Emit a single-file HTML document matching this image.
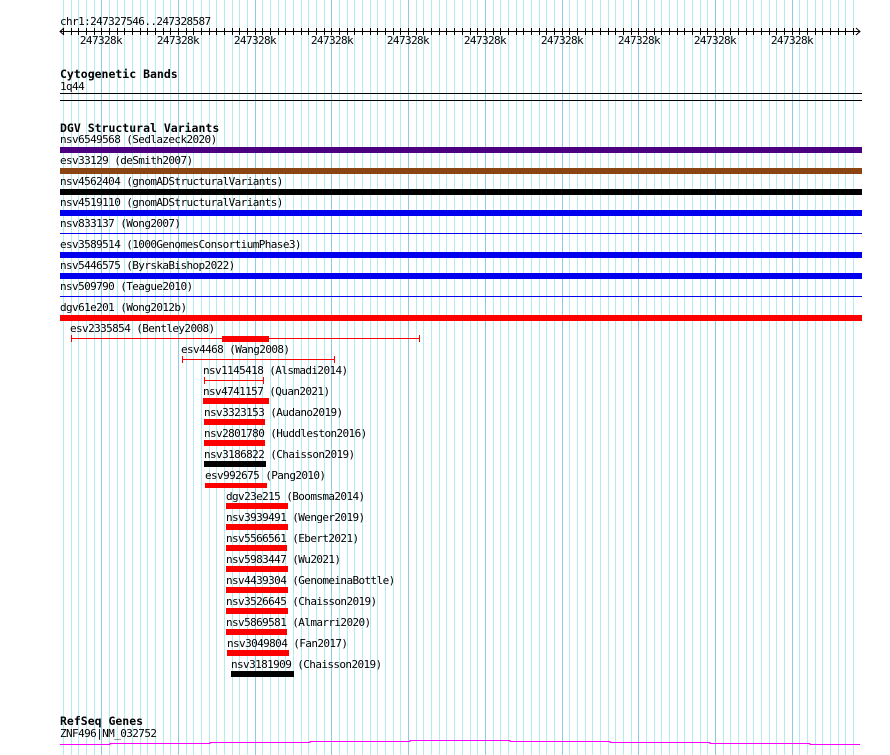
<!DOCTYPE html>
<html><head><meta charset="utf-8"><style>
html,body{margin:0;padding:0;background:#fff;}
svg{display:block;}
text{font-family:"DejaVu Sans Mono","Liberation Mono",monospace;font-size:11px;letter-spacing:-0.6px;fill:#000;}
.b{font-weight:bold;font-size:11.5px;letter-spacing:0;}
</style></head><body>
<svg width="890" height="755" xmlns="http://www.w3.org/2000/svg">
<defs>
<path id="L" d="M63.5 0V755M71.5 0V755M78.5 0V755M86.5 0V755M94.5 0V755M109.5 0V755M117.5 0V755M124.5 0V755M132.5 0V755M140.5 0V755M147.5 0V755M155.5 0V755M163.5 0V755M170.5 0V755M186.5 0V755M193.5 0V755M201.5 0V755M209.5 0V755M216.5 0V755M224.5 0V755M232.5 0V755M239.5 0V755M247.5 0V755M262.5 0V755M270.5 0V755M278.5 0V755M285.5 0V755M293.5 0V755M301.5 0V755M308.5 0V755M316.5 0V755M324.5 0V755M339.5 0V755M347.5 0V755M354.5 0V755M362.5 0V755M370.5 0V755M377.5 0V755M385.5 0V755M393.5 0V755M400.5 0V755M416.5 0V755M423.5 0V755M431.5 0V755M439.5 0V755M446.5 0V755M454.5 0V755M462.5 0V755M470.5 0V755M477.5 0V755M493.5 0V755M500.5 0V755M508.5 0V755M516.5 0V755M523.5 0V755M531.5 0V755M539.5 0V755M546.5 0V755M554.5 0V755M569.5 0V755M577.5 0V755M585.5 0V755M592.5 0V755M600.5 0V755M608.5 0V755M615.5 0V755M623.5 0V755M631.5 0V755M646.5 0V755M654.5 0V755M661.5 0V755M669.5 0V755M677.5 0V755M684.5 0V755M692.5 0V755M700.5 0V755M707.5 0V755M723.5 0V755M730.5 0V755M738.5 0V755M746.5 0V755M753.5 0V755M761.5 0V755M769.5 0V755M776.5 0V755M784.5 0V755M799.5 0V755M807.5 0V755M815.5 0V755M822.5 0V755M830.5 0V755M838.5 0V755M845.5 0V755M853.5 0V755"/>
<path id="M" d="M101.5 0V755M178.5 0V755M255.5 0V755M331.5 0V755M408.5 0V755M485.5 0V755M562.5 0V755M638.5 0V755M715.5 0V755M792.5 0V755"/>
<clipPath id="tc"><rect x="0" y="28" width="890" height="7"/></clipPath>
</defs>
<use href="#L" stroke="#b4eaf2" fill="none"/>
<use href="#M" stroke="#8ccbea" fill="none"/>
<!-- ruler -->
<text x="60" y="25">chr1:247327546..247328587</text>
<line x1="60" y1="31.5" x2="860" y2="31.5" stroke="#000"/>
<path d="M64 28 L60 31.5 L64 35 M856 28 L860 31.5 L856 35" stroke="#000" fill="none"/>
<g clip-path="url(#tc)" stroke="#000" fill="none"><use href="#L"/><use href="#M"/></g>
<g text-anchor="middle">
<text x="101" y="44">247328k</text><text x="178" y="44">247328k</text><text x="255" y="44">247328k</text><text x="332" y="44">247328k</text><text x="408" y="44">247328k</text><text x="485" y="44">247328k</text><text x="562" y="44">247328k</text><text x="639" y="44">247328k</text><text x="715" y="44">247328k</text><text x="792" y="44">247328k</text>
</g>
<!-- cyto -->
<text class="b" x="60" y="78">Cytogenetic Bands</text>
<text x="60" y="90">1q44</text>
<line x1="60" y1="93.5" x2="862" y2="93.5" stroke="#000"/>
<line x1="60" y1="100.5" x2="862" y2="100.5" stroke="#000"/>
<!-- DGV -->
<text class="b" x="60" y="132">DGV Structural Variants</text>
<text x="60" y="143">nsv6549568 (Sedlazeck2020)</text>
<rect x="60" y="147" width="802" height="6" fill="#4b0082"/>
<text x="60" y="164">esv33129 (deSmith2007)</text>
<rect x="60" y="168" width="802" height="6" fill="#8b4513"/>
<text x="60" y="185">nsv4562404 (gnomADStructuralVariants)</text>
<rect x="60" y="189" width="802" height="6" fill="#000"/>
<text x="60" y="206">nsv4519110 (gnomADStructuralVariants)</text>
<rect x="60" y="210" width="802" height="6" fill="#0000ee"/>
<text x="60" y="227">nsv833137 (Wong2007)</text>
<rect x="60" y="233" width="802" height="1" fill="#0000ee"/>
<text x="60" y="248">esv3589514 (1000GenomesConsortiumPhase3)</text>
<rect x="60" y="252" width="802" height="6" fill="#0000ee"/>
<text x="60" y="269">nsv5446575 (ByrskaBishop2022)</text>
<rect x="60" y="273" width="802" height="6" fill="#0000ee"/>
<text x="60" y="290">nsv509790 (Teague2010)</text>
<rect x="60" y="296" width="802" height="1" fill="#0000ee"/>
<text x="60" y="311">dgv61e201 (Wong2012b)</text>
<rect x="60" y="315" width="802" height="6" fill="#f00"/>
<text x="70" y="332">esv2335854 (Bentley2008)</text>
<path d="M71 338.5H420M71.5 335v7M419.5 335v7" stroke="#f00"/>
<rect x="222" y="336" width="47" height="6" fill="#f00"/>
<text x="181" y="353">esv4468 (Wang2008)</text>
<path d="M182 359.5H335M182.5 356v7M334.5 356v7" stroke="#f00"/>
<text x="203" y="374">nsv1145418 (Alsmadi2014)</text>
<path d="M204 380.5H264M204.5 377v7M263.5 377v7" stroke="#f00"/>
<text x="203" y="395">nsv4741157 (Quan2021)</text>
<rect x="203" y="398" width="66" height="6" fill="#f00"/>
<text x="204" y="416">nsv3323153 (Audano2019)</text>
<rect x="204" y="419" width="61" height="6" fill="#f00"/>
<text x="204" y="437">nsv2801780 (Huddleston2016)</text>
<rect x="204" y="440" width="61" height="6" fill="#f00"/>
<text x="204" y="458">nsv3186822 (Chaisson2019)</text>
<rect x="204" y="461" width="62" height="6" fill="#000"/>
<text x="205" y="479">esv992675 (Pang2010)</text>
<rect x="205" y="483" width="62" height="5" fill="#f00"/>
<text x="226" y="500">dgv23e215 (Boomsma2014)</text>
<rect x="226" y="503" width="62" height="6" fill="#f00"/>
<text x="226" y="521">nsv3939491 (Wenger2019)</text>
<rect x="226" y="524" width="62" height="6" fill="#f00"/>
<text x="226" y="542">nsv5566561 (Ebert2021)</text>
<rect x="226" y="545" width="61" height="6" fill="#f00"/>
<text x="226" y="563">nsv5983447 (Wu2021)</text>
<rect x="226" y="566" width="62" height="6" fill="#f00"/>
<text x="226" y="584">nsv4439304 (GenomeinaBottle)</text>
<rect x="226" y="587" width="62" height="6" fill="#f00"/>
<text x="226" y="605">nsv3526645 (Chaisson2019)</text>
<rect x="226" y="608" width="62" height="6" fill="#f00"/>
<text x="226" y="626">nsv5869581 (Almarri2020)</text>
<rect x="226" y="629" width="61" height="6" fill="#f00"/>
<text x="227" y="647">nsv3049804 (Fan2017)</text>
<rect x="227" y="650" width="62" height="6" fill="#f00"/>
<text x="231" y="668">nsv3181909 (Chaisson2019)</text>
<rect x="231" y="671" width="63" height="6" fill="#000"/>
<!-- RefSeq -->
<text class="b" x="60" y="725">RefSeq Genes</text>
<text x="60" y="737">ZNF496|NM_032752</text>
<path d="M60 744.5H110V743.5H210V742.5H310V741.5H410V740.5H510V741.5H610V742.5H710V743.5H810V744.5H860" stroke="#f0f" fill="none"/>
</svg>
</body></html>
